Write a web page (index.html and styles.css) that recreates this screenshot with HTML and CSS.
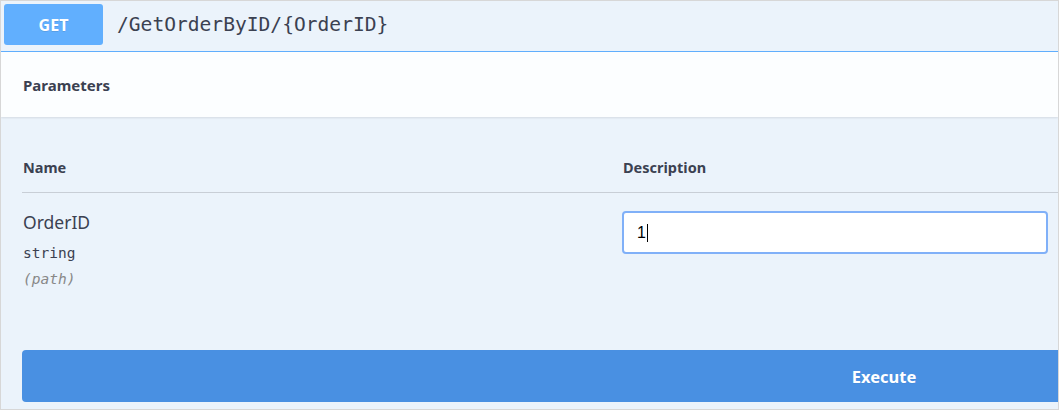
FILE: index.html
```html
<!DOCTYPE html>
<html>
<head>
<meta charset="utf-8">
<link rel="stylesheet" href="styles.css">
</head>
<body>
<div class="frame">
  <div class="summary">
    <span class="method">GET</span>
    <span class="path">/GetOrderByID/{OrderID}</span>
  </div>
  <div class="section-header">
    <h4 class="title">Parameters</h4>
  </div>
  <div class="params">
    <div class="row head">
      <div class="col-name">Name</div>
      <div class="col-desc">Description</div>
    </div>
    <div class="row body">
      <div class="col-name">
        <div class="param-name">OrderID</div>
        <div class="param-type">string</div>
        <div class="param-in">(path)</div>
      </div>
      <div class="col-desc">
        <div class="input"><span class="val">1</span><span class="caret"></span></div>
      </div>
    </div>
  </div>
  <div class="actions">
    <button class="execute">Execute</button>
  </div>
</div>
</body>
</html>
```

FILE: styles.css
```css
* { box-sizing: border-box; }
html, body { margin: 0; padding: 0; }
body {
  width: 1059px;
  height: 410px;
  overflow: hidden;
  font-family: "Noto Sans", "Open Sans", sans-serif;
  color: #3b4151;
}
.frame {
  width: 1059px;
  height: 410px;
  border: 1px solid #d7d7d7;
  background: #ebf3fb;
  overflow: hidden;
}
.summary {
  height: 51px;
  display: flex;
  align-items: flex-start;
  padding: 3px 0 0 3px;
  border-bottom: 1px solid #61affe;
}
.method {
  width: 99px;
  height: 41px;
  background: #61affe;
  border-radius: 3px;
  color: #fff;
  font-weight: 700;
  font-size: 16px;
  display: flex;
  align-items: center;
  justify-content: center;
  text-shadow: 0 1px 0 rgba(0,0,0,.1);
}
.path {
  margin-left: 14px;
  height: 41px;
  display: flex;
  align-items: center;
  font-family: "DejaVu Sans Mono", monospace;
  font-size: 19.6px;
  font-weight: 400;
  color: #3b4151;
}
.section-header {
  height: 65px;
  background: rgba(255,255,255,.85);
  box-shadow: 0 1px 2px rgba(0,0,0,.1);
  display: flex;
  align-items: center;
  padding-left: 22px;
  position: relative;
}
.title {
  margin: 0;
  font-size: 15px;
  font-weight: 700;
  color: #3b4151;
}
.params {
  padding: 0 0 0 21px;
}
.row {
  display: flex;
}
.col-name { width: 600px; }
.col-desc { flex: 1; }
.row.head {
  margin-top: 34px;
  height: 42px;
  border-bottom: 1px solid #c8ced6;
  font-size: 14.5px;
  font-weight: 700;
  align-items: center;
  padding-left: 1px;
}
.row.head .col-name { padding-bottom: 9px; }
.row.head .col-desc { padding-bottom: 9px; }
.row.body { padding-top: 18px; padding-left: 1px; }
.param-name {
  font-size: 17.5px;
  line-height: 22px;
  color: #3b4151;
}
.param-type {
  margin-top: 11px;
  font-family: "DejaVu Sans Mono", monospace;
  font-size: 14.5px;
  line-height: 19px;
  color: #3b4151;
}
.param-in {
  margin-top: 7px;
  font-family: "DejaVu Sans Mono", monospace;
  font-size: 14.5px;
  font-style: italic;
  line-height: 19px;
  color: #888;
}
.input {
  margin-top: 0;
  margin-left: -1px;
  width: 426px;
  height: 43px;
  background: #fff;
  border: 2px solid #80b0f8;
  border-radius: 4px;
  display: flex;
  align-items: center;
  padding-left: 13px;
  font-family: "Liberation Sans", Arial, sans-serif;
  font-size: 16px;
  color: #000;
}
.caret {
  display: inline-block;
  width: 1px;
  height: 18px;
  background: #000;
  margin-left: 1px;
}
.actions {
  padding: 61px 0 0 21px;
}
.execute {
  display: block;
  width: 1724px;
  height: 52px;
  border: none;
  border-radius: 4px;
  background: #4990e2;
  color: #fff;
  font-family: "Noto Sans", "Open Sans", sans-serif;
  font-size: 16.5px;
  font-weight: 700;
  text-shadow: 0 1px 0 rgba(0,0,0,.05);
}
```
